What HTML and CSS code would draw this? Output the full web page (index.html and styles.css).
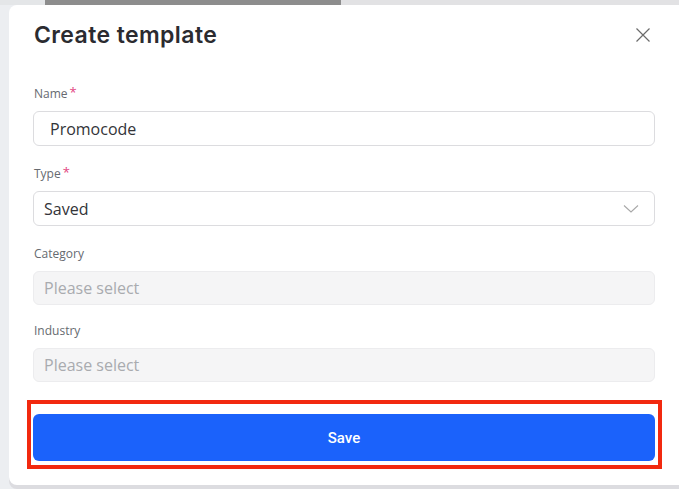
FILE: index.html
```html
<!DOCTYPE html>
<html>
<head>
<meta charset="utf-8">
<link rel="stylesheet" href="styles.css">
</head>
<body>
<div class="topbar">
  <div class="tb-left"></div>
  <div class="tb-dark"></div>
  <div class="tb-rest"></div>
</div>
<div class="modal">
  <div class="header">
    <h1 class="title">Create template</h1>
    <button class="close" aria-label="Close">
      <svg width="16" height="16" viewBox="0 0 16 16"><path d="M1.5 1.5 L14.5 14.5 M14.5 1.5 L1.5 14.5" stroke="#6b6b6b" stroke-width="1.2" fill="none"/></svg>
    </button>
  </div>
  <div class="form">
    <div class="field">
      <div class="label">Name<span class="req">*</span></div>
      <div class="input name-input">Promocode</div>
    </div>
    <div class="field">
      <div class="label">Type<span class="req">*</span></div>
      <div class="input select">
        <span>Saved</span>
        <svg class="chev" width="16" height="10" viewBox="0 0 16 10"><path d="M1 1.5 L8 8 L15 1.5" stroke="#a8a8a8" stroke-width="1.1" fill="none"/></svg>
      </div>
    </div>
    <div class="field short">
      <div class="label">Category</div>
      <div class="input disabled">Please select</div>
    </div>
    <div class="field last">
      <div class="label">Industry</div>
      <div class="input disabled">Please select</div>
    </div>
    <div class="highlight">
      <button class="save">Save</button>
    </div>
  </div>
</div>
</body>
</html>
```
FILE: styles.css
```css
* { box-sizing: border-box; }
html, body { margin: 0; padding: 0; }
body {
  width: 679px;
  height: 489px;
  overflow: hidden;
  background: #eceef1;
  font-family: "Open Sans", "Noto Sans", sans-serif;
}
.topbar {
  display: flex;
  height: 5px;
}
.tb-left { width: 45px; background: #e4e6e8; }
.tb-dark { width: 296px; background: #8d8d8d; }
.tb-rest { flex: 1; background: #e2e2e4; }
.modal {
  margin-left: 9px;
  width: 670px;
  height: 480px;
  background: #fff;
  border-radius: 8px 0 0 8px;
  padding: 0 24px;
  box-shadow: 0 4px 0 #dcdce0;
}
.header {
  display: flex;
  align-items: center;
  justify-content: space-between;
  padding-top: 2px;
  height: 58px;
}
.title {
  margin: 0 0 0 1px;
  font-family: "Inter", sans-serif;
  font-weight: 600;
  font-size: 23px;
  line-height: 28px;
  color: #2b2b30;
  letter-spacing: 0.4px;
}
.close {
  border: 0;
  background: none;
  padding: 0;
  margin-right: 4px;
  margin-top: 0;
  width: 16px;
  height: 16px;
  display: flex;
}
.form {
  padding-top: 23px;
}
.field { margin-bottom: 20px; }
.field.short { margin-bottom: 18px; }
.field.last { margin-bottom: 18px; }
.label {
  font-size: 12px;
  line-height: 16px;
  height: 16px;
  color: #666a70;
  margin-bottom: 9px;
  padding-left: 1px;
}
.req {
  color: #e2467f;
  font-size: 13px;
  line-height: 0;
  margin-left: 2px;
  vertical-align: 1px;
}
.input {
  height: 35px;
  border: 1px solid #dcdcdf;
  border-radius: 6px;
  font-size: 16px;
  color: #333438;
  display: flex;
  align-items: center;
  padding-left: 10px;
}
.name-input { padding-left: 16px; }
.select {
  justify-content: space-between;
  padding-right: 15px;
}
.chev { margin-top: 1px; }
.disabled {
  height: 34px;
  background: #f5f5f6;
  border-color: #ececee;
  color: #a9abaf;
}
.highlight {
  margin-left: -6px;
  margin-top: 0;
  width: 635px;
  border: 4px solid #f2290f;
  padding: 10px 2px 4px 2px;
}
.save {
  display: block;
  width: 622px;
  height: 47px;
  border: 0;
  border-radius: 6px;
  background: #1b62fb;
  color: #fff;
  font-family: "Roboto", "Noto Sans", sans-serif;
  font-weight: 500;
  font-size: 15px;
  letter-spacing: 0;
}
```
